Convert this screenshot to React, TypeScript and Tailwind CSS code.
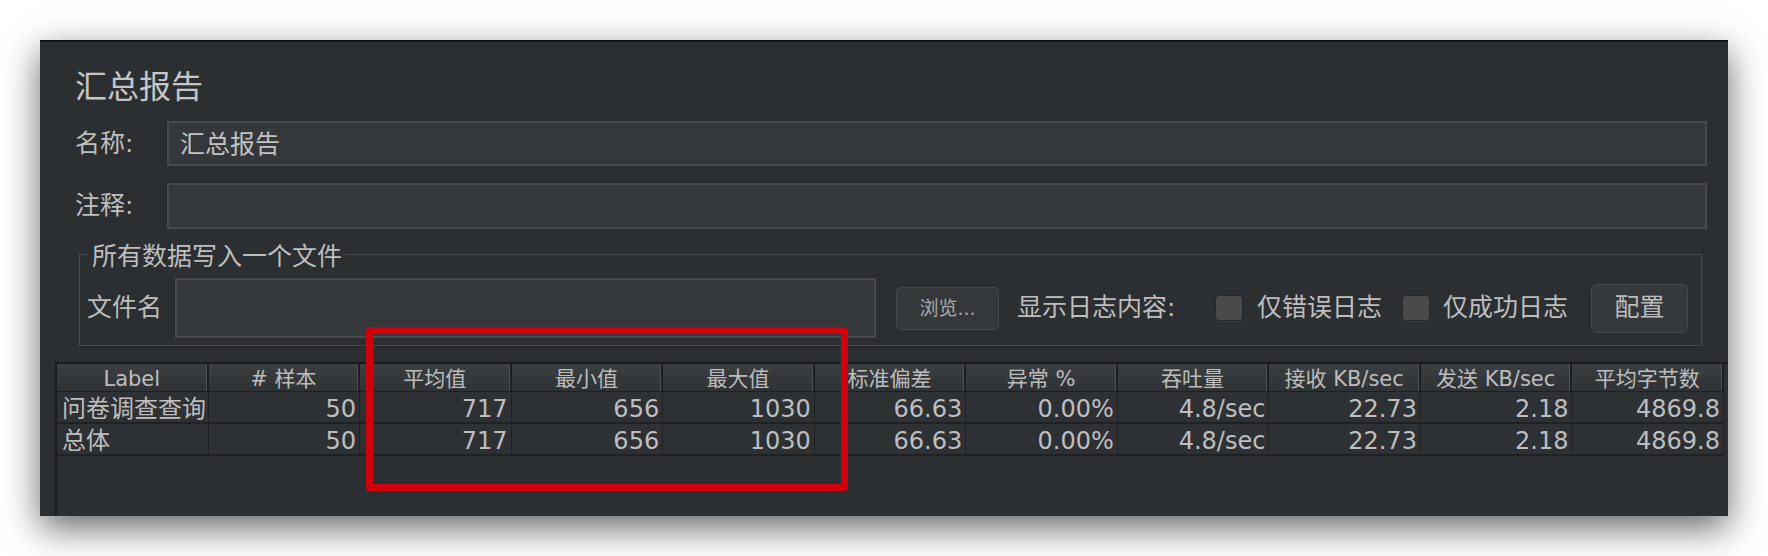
import React from "react";

const headers = [
  "Label",
  "# 样本",
  "平均值",
  "最小值",
  "最大值",
  "标准偏差",
  "异常 %",
  "吞吐量",
  "接收 KB/sec",
  "发送 KB/sec",
  "平均字节数",
];

const rows = [
  ["问卷调查查询", "50", "717", "656", "1030", "66.63", "0.00%", "4.8/sec", "22.73", "2.18", "4869.8"],
  ["总体", "50", "717", "656", "1030", "66.63", "0.00%", "4.8/sec", "22.73", "2.18", "4869.8"],
];

function Checkbox() {
  return (
    <div className="w-[28px] h-[26px] shrink-0 rounded-[4px] bg-[#4a4a4b] border border-[#252628] shadow-[0_1px_0_#3a3d40]" />
  );
}

export default function App() {
  return (
    <div className="w-[1768px] h-[556px] bg-white pl-[40px] pt-[40px] overflow-hidden font-['DejaVu_Sans','Noto_Sans_CJK_SC',sans-serif] text-[#bebebe]">
      {/* Window */}
      <div className="relative flex flex-col w-[1688px] h-[476px] bg-[#2c2f32] border-t-2 border-[#121314] shadow-[0_12px_34px_rgba(0,0,0,0.6)]">
        <h1 className="ml-[35px] mt-[25px] text-[32px] leading-[40px] text-[#c6c6c6]">汇总报告</h1>

        {/* Name */}
        <div className="mt-[14px] ml-[35px] flex items-center">
          <span className="w-[92px] text-[25px] leading-[30px]">名称:</span>
          <div className="w-[1540px] h-[45px] flex items-center pl-[11px] pt-[2px] bg-[#35383a] border-2 border-[#47494c] text-[25px] text-[#c2c2c2]">
            汇总报告
          </div>
        </div>

        {/* Comment */}
        <div className="mt-[17px] ml-[35px] flex items-center">
          <span className="w-[92px] text-[25px] leading-[30px]">注释:</span>
          <div className="w-[1540px] h-[46px] bg-[#35383a] border-2 border-[#47494c]" />
        </div>

        {/* Write all data to file */}
        <fieldset className="mt-[10px] ml-[39px] w-[1623px] border border-[#4a4d50] shadow-[0_1px_0_#202224] px-[7px] pb-[7px]">
          <legend className="relative top-[3px] ml-[2px] px-[3px] text-[25px] leading-[30px]">所有数据写入一个文件</legend>
          <div className="mt-[9px] h-[60px] flex items-center">
            <span className="w-[88px] text-[25px] leading-[30px]">文件名</span>
            <div className="w-[701px] h-[60px] bg-[#35383a] border-2 border-[#47494c]" />
            <button className="ml-[20px] w-[103px] h-[43px] rounded-[5px] bg-[#35383b] border border-[#45484b] text-[19px] text-[#a9a9a9]">
              浏览...
            </button>
            <span className="ml-[18px] w-[198px] text-[25px] leading-[30px]">显示日志内容:</span>
            <Checkbox />
            <span className="ml-[14px] w-[145px] text-[25px] leading-[30px]">仅错误日志</span>
            <Checkbox />
            <span className="ml-[13px] w-[148px] text-[25px] leading-[30px]">仅成功日志</span>
            <button className="w-[97px] h-[49px] rounded-[6px] bg-[#36393c] border border-[#46494c] text-[25px] text-[#bdbdbd]">
              配置
            </button>
          </div>
        </fieldset>

        {/* Results table */}
        <div className="mt-[16px] ml-[15px] flex-1 border-l-2 border-t-2 border-[#1a1c1e]">
          <div className="w-[1667px] grid grid-cols-11">
            {headers.map((h) => (
              <div
                key={h}
                className="h-[28px] flex items-center justify-center pt-[3px] border-r-2 border-b border-[#1d1f21] bg-[linear-gradient(#3c3f42,#2f3235)] shadow-[inset_-1px_0_0_#4e5154] text-[21px] leading-[26px] text-[#bdbdbd] whitespace-nowrap"
              >
                {h}
              </div>
            ))}
            {rows.map((r, ri) =>
              r.map((c, ci) => (
                <div
                  key={ri + "-" + ci}
                  className={
                    ci === 0
                      ? "h-[32px] flex items-center pl-[5px] pt-[3px] border-r border-b-2 border-[#1f2123] bg-[#2e3134] text-[24px] leading-[28px] whitespace-nowrap overflow-hidden"
                      : "h-[32px] flex items-center justify-end pr-[3px] pt-[3px] border-r border-b-2 border-[#1f2123] bg-[#2e3134] text-[24px] leading-[28px] whitespace-nowrap"
                  }
                >
                  {c}
                </div>
              ))
            )}
          </div>
        </div>

        {/* Highlight */}
        <div className="absolute top-[285px] left-[326px] w-[482px] h-[164px] border-[7px] border-[#d1000d] rounded-[4px]" />
      </div>
    </div>
  );
}
